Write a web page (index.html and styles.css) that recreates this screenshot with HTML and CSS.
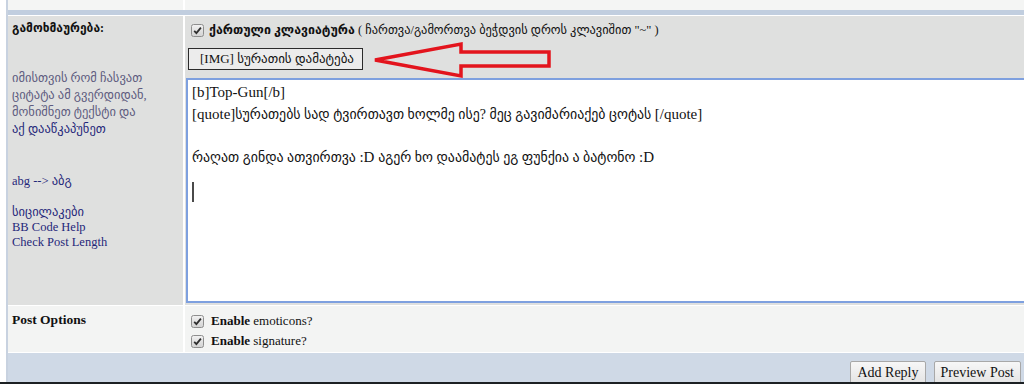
FILE: index.html
```html
<!DOCTYPE html>
<html lang="ka">
<head>
<meta charset="utf-8">
<title>Reply</title>
<link rel="stylesheet" href="styles.css">
</head>
<body>
<div class="page">
  <div class="frame">
    <div class="row row-prev"><div class="cell"></div><div class="cell"></div></div>
    <div class="band"></div>
    <div class="row row-main">
      <div class="cell cell-left">
        <div class="lead">გამოხმაურება:</div>
        <div class="desc">იმისთვის რომ ჩასვათ<br>ციტატა ამ გვერდიდან,<br>მონიშნეთ ტექსტი და<br><a href="#">აქ დააწკაპუნეთ</a></div>
        <div class="trans"><a href="#">abg --&gt; აბგ</a></div>
        <div class="links">
          <a href="#">სიცილაკები</a>
          <a href="#">BB Code Help</a>
          <a href="#">Check Post Length</a>
        </div>
      </div>
      <div class="cell cell-right">
        <div class="kb-line">
          <span class="cb"><svg width="13" height="13" viewBox="0 0 13 13"><defs><linearGradient id="g1" x1="0" y1="0" x2="0" y2="1"><stop offset="0" stop-color="#f2f2f2"/><stop offset="1" stop-color="#d2d2d2"/></linearGradient></defs><rect x="0.5" y="0.5" width="12" height="12" rx="2" fill="url(#g1)" stroke="#8e8e8e"/><path d="M3.2 6.9 L5.4 9.1 L9.9 3.6" fill="none" stroke="#2f2f2f" stroke-width="1.8"/></svg></span>
          <span><b>ქართული კლავიატურა</b> ( ჩართვა/გამორთვა ბეჭდვის დროს კლავიშით "~" )</span>
        </div>
        <button class="img-btn" type="button">[IMG] სურათის დამატება</button>
        <div class="editor">
          <div>[b]Top-Gun[/b]</div>
          <div>[quote]<span class="ka">სურათებს სად ტვირთავთ ხოლმე ისე? მეც გავიმარიაქებ ცოტას </span>[/quote]</div>
          <div>&nbsp;</div>
          <div><span class="ka">რაღათ გინდა ათვირთვა </span>:D <span class="ka">აგერ ხო დაამატეს ეგ ფუნქია ა ბატონო </span>:D</div>
          <div class="caret"></div>
        </div>
      </div>
    </div>
    <div class="row row-opts">
      <div class="cell cell-left"><div class="opts-title">Post Options</div></div>
      <div class="cell cell-right">
        <div class="opt">
          <span class="cb"><svg width="13" height="13" viewBox="0 0 13 13"><defs><linearGradient id="g2" x1="0" y1="0" x2="0" y2="1"><stop offset="0" stop-color="#f2f2f2"/><stop offset="1" stop-color="#d2d2d2"/></linearGradient></defs><rect x="0.5" y="0.5" width="12" height="12" rx="2" fill="url(#g2)" stroke="#8e8e8e"/><path d="M3.2 6.9 L5.4 9.1 L9.9 3.6" fill="none" stroke="#2f2f2f" stroke-width="1.8"/></svg></span>
          <span><b>Enable</b> emoticons?</span>
        </div>
        <div class="opt">
          <span class="cb"><svg width="13" height="13" viewBox="0 0 13 13"><defs><linearGradient id="g3" x1="0" y1="0" x2="0" y2="1"><stop offset="0" stop-color="#f2f2f2"/><stop offset="1" stop-color="#d2d2d2"/></linearGradient></defs><rect x="0.5" y="0.5" width="12" height="12" rx="2" fill="url(#g3)" stroke="#8e8e8e"/><path d="M3.2 6.9 L5.4 9.1 L9.9 3.6" fill="none" stroke="#2f2f2f" stroke-width="1.8"/></svg></span>
          <span><b>Enable</b> signature?</span>
        </div>
      </div>
    </div>
    <div class="footer">
      <button class="btn" type="button">Add Reply</button>
      <button class="btn" type="button">Preview Post</button>
    </div>
  </div>
  <div class="taskbar"></div>
  <svg class="arrow" width="1024" height="90" viewBox="0 0 1024 90"><polygon points="375,60 461,44 461,52 549,52 549,66 461,66 461,76" fill="none" stroke="#e3141d" stroke-width="3.5" stroke-linejoin="miter"/></svg>
</div>
</body>
</html>
```
FILE: styles.css
```css
* { box-sizing: border-box; }
html, body {
  margin: 0;
  height: 384px;
  overflow: hidden;
  background: #fff;
}
body {
  font-family: "Liberation Serif", "DejaVu Sans", serif;
  color: #111;
}
a { text-decoration: none; }
.page {
  position: relative;
  width: 1024px;
  height: 384px;
  display: flex;
  flex-direction: column;
}
.frame {
  flex: 1;
  min-height: 0;
  margin-left: 6px;
  border-left: 2px solid #c8d2e0;
  display: flex;
  flex-direction: column;
}
.row {
  display: grid;
  grid-template-columns: 175px 1fr;
  column-gap: 2px;
  background: #fff;
}
.row-prev { height: 10px; }
.row-prev .cell { background: #f4f5f4; }
.band {
  height: 6px;
  background: #c1cedf;
  border-bottom: 1px solid #fff;
}
.row-main {
  height: 290px;
  border-bottom: 1px solid #fff;
}
.row-main .cell { background: #dfe0df; }
.cell-left { padding: 4px 4px 0 4px; }
.lead {
  font-weight: bold;
  font-size: 12px;
  line-height: 17px;
  color: #111;
}
.desc {
  margin-top: 33px;
  font-size: 12.5px;
  line-height: 17px;
  color: #5d5b7e;
  white-space: nowrap;
}
.desc a, .trans a, .links a { color: #1f277a; }
.trans {
  margin-top: 36px;
  font-size: 12.5px;
  line-height: 15px;
}
.links {
  margin-top: 16px;
  display: flex;
  flex-direction: column;
  font-size: 12.5px;
  line-height: 15px;
}
.cell-right { padding: 4px 0 2px 0; overflow: hidden; }
.kb-line {
  display: flex;
  align-items: center;
  gap: 5px;
  height: 20px;
  padding-left: 6px;
  font-size: 12.4px;
  white-space: nowrap;
}
.cb { display: flex; width: 13px; height: 13px; flex: none; }
.img-btn {
  display: block;
  margin: 8px 0 0 3px;
  width: 175px;
  height: 22px;
  padding: 0 0 0 11px;
  border: 1px solid #2b2b2b;
  background: #ececec;
  text-align: left;
  font-family: "Liberation Serif", "DejaVu Sans", serif;
  font-size: 13px;
  color: #111;
  white-space: nowrap;
}
.editor {
  margin: 8px 0 0 1px;
  height: 225px;
  background: #fff;
  border: 2px solid #7ea0df;
  border-right: none;
  padding: 2px 4px;
  font-size: 15px;
  line-height: 21.5px;
  color: #111;
  white-space: nowrap;
}
.editor .ka { font-size: 13.9px; }
.caret {
  width: 2px;
  height: 20px;
  margin-top: 14px;
  background: #4a4a4a;
}
.row-opts {
  height: 47px;
  border-bottom: 1px solid #fff;
}
.row-opts .cell { background: #f3f4f3; }
.opts-title {
  font-weight: bold;
  font-size: 13.5px;
  line-height: 20px;
}
.row-opts .cell-right { padding: 5px 0 0 6px; }
.opt {
  display: flex;
  align-items: center;
  gap: 7px;
  height: 20px;
  font-size: 13px;
}
.footer {
  height: 29px;
  background: #cfd9e6;
  display: flex;
  justify-content: flex-end;
  align-items: flex-start;
  gap: 8px;
  padding: 8px 3px 0 0;
  overflow: hidden;
}
.btn {
  flex: none;
  height: 24px;
  padding: 0 6px;
  font-family: "Liberation Serif", serif;
  font-size: 14px;
  color: #111;
  background: linear-gradient(#f7f7f7, #e3e3e3);
  border: 1px solid #a8a8a8;
  border-radius: 2px;
}
.taskbar {
  height: 2px;
  background: #1c2023;
}
.arrow {
  position: absolute;
  left: 0;
  top: 0;
  pointer-events: none;
}
```
